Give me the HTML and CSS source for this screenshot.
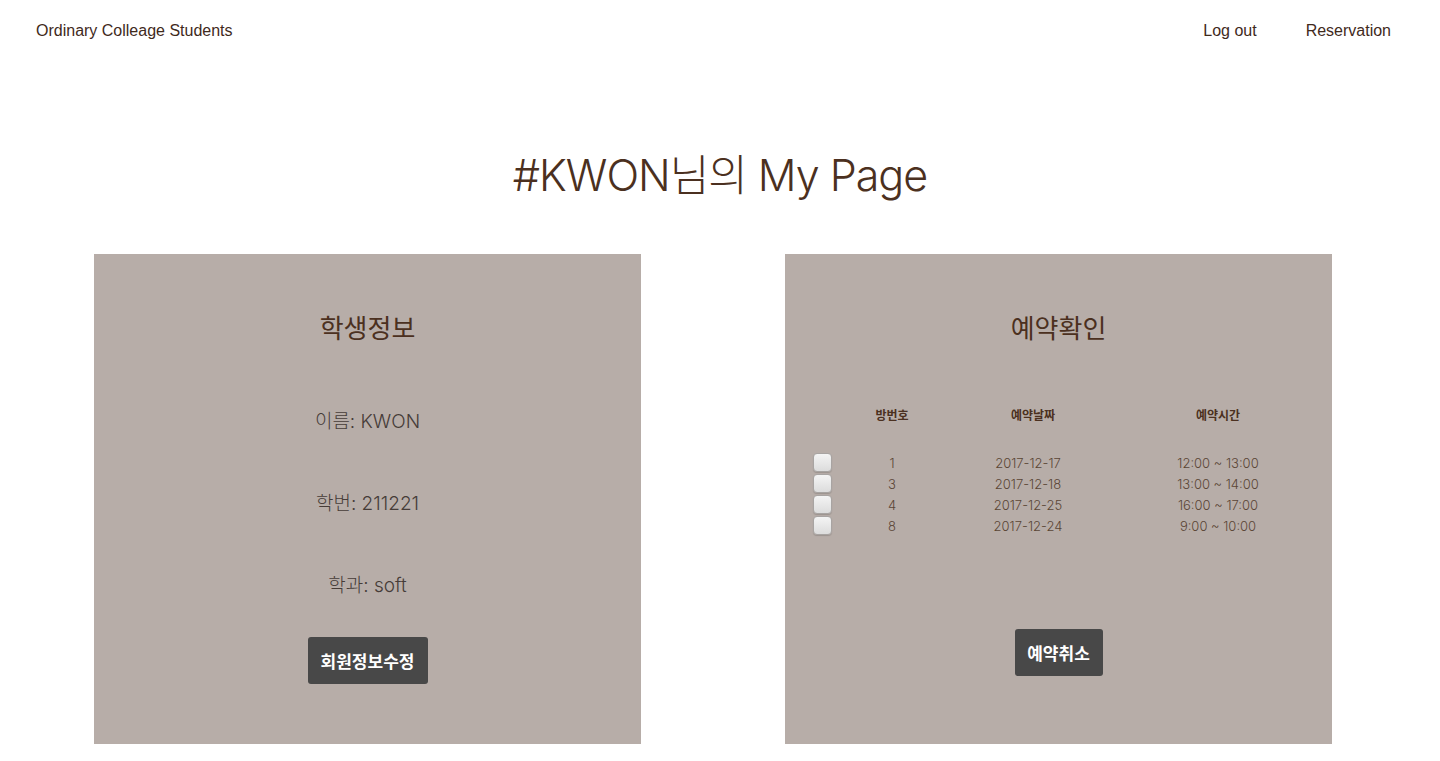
FILE: index.html
```html
<!DOCTYPE html>
<html lang="ko">
<head>
<meta charset="utf-8">
<title>My Page</title>
<link rel="stylesheet" href="styles.css">
</head>
<body>
<header class="topbar">
  <a class="brand" href="#">Ordinary Colleage Students</a>
  <nav class="nav">
    <a href="#">Log out</a>
    <a href="#">Reservation</a>
  </nav>
</header>
<h1 class="page-title">#KWON님의 My Page</h1>
<main class="panels">
  <section class="panel">
    <h2 class="panel-title">학생정보</h2>
    <p class="info first">이름: KWON</p>
    <p class="info">학번: 211221</p>
    <p class="info">학과: soft</p>
    <button class="btn btn-left">회원정보수정</button>
  </section>
  <section class="panel">
    <h2 class="panel-title">예약확인</h2>
    <div class="table">
      <div class="thead">
        <span></span><span>방번호</span><span class="c-date">예약날짜</span><span>예약시간</span>
      </div>
      <div class="tbody">
        <div class="row"><input type="checkbox" class="cb"><span>1</span><span>2017-12-17</span><span>12:00 ~ 13:00</span></div>
        <div class="row"><input type="checkbox" class="cb"><span>3</span><span>2017-12-18</span><span>13:00 ~ 14:00</span></div>
        <div class="row"><input type="checkbox" class="cb"><span>4</span><span>2017-12-25</span><span>16:00 ~ 17:00</span></div>
        <div class="row"><input type="checkbox" class="cb"><span>8</span><span>2017-12-24</span><span>9:00 ~ 10:00</span></div>
      </div>
    </div>
    <button class="btn btn-right">예약취소</button>
  </section>
</main>
</body>
</html>
```

FILE: styles.css
```css
* { box-sizing: border-box; }
html, body { margin: 0; padding: 0; background: #fff; }
body {
  font-family: "Liberation Sans", "Noto Sans CJK KR", sans-serif;
  color: #4b3222;
}
a { color: inherit; text-decoration: none; }

.topbar {
  height: 60px;
  display: flex;
  align-items: center;
  justify-content: space-between;
  padding: 2px 49px 0 36px;
  font-size: 16px;
  color: #3f2a1c;
}
.nav { display: flex; gap: 49px; }

.page-title {
  margin: 89px 0 53px;
  text-align: center;
  font-family: "Inter", "Noto Sans CJK KR", sans-serif;
  font-weight: 300;
  font-size: 43px;
  line-height: 52px;
  letter-spacing: -1px;
  color: #4b3020;
}

.panels {
  display: flex;
  justify-content: center;
  gap: 144px;
  padding-right: 14px;
}
.panel {
  width: 547px;
  height: 490px;
  background: #b7ada8;
  display: flex;
  flex-direction: column;
  align-items: center;
  padding-top: 57px;
}
.panel-title {
  margin: 0;
  font-family: "Noto Sans CJK KR", sans-serif;
  font-weight: 400;
  font-size: 26px;
  line-height: 32px;
  color: #4b3020;
}
.info {
  margin: 58px 0 0;
  font-family: "Inter", "Noto Sans CJK KR", sans-serif;
  font-weight: 300;
  font-size: 19px;
  line-height: 24px;
  color: #463c38;
}
.info.first { margin-top: 67px; }

.btn {
  border: 0;
  border-radius: 3px;
  background: #484848;
  color: #fff;
  font-family: "Noto Sans CJK KR", sans-serif;
  font-weight: 700;
  font-size: 17px;
  height: 47px;
  padding: 0;
}
.btn-left { width: 120px; margin-top: 39px; }
.btn-right { width: 88px; margin-top: 93px; }

.table {
  align-self: stretch;
  margin-top: 61px;
  padding-left: 27px;
  font-size: 13px;
}
.thead, .row {
  display: grid;
  grid-template-columns: 20px 120px 152px 228px;
  align-items: center;
}
.thead span, .row span { text-align: center; }
.thead {
  height: 20px;
  font-family: "Noto Sans CJK KR", sans-serif;
  font-weight: 700;
  font-size: 12px;
  color: #4b3020;
}
.thead .c-date { padding-left: 10px; }
.tbody { margin-top: 28px; }
.row {
  height: 21px;
  font-family: "Inter", sans-serif;
  font-weight: 300;
  color: #5a4535;
}
.cb {
  appearance: none;
  -webkit-appearance: none;
  margin: 0 0 0 1px;
  width: 19px;
  height: 19px;
  border: 1px solid #a8a4a2;
  border-radius: 4px;
  background: linear-gradient(#f4f4f4, #dcdcdc);
  box-shadow: 0 1px 1px rgba(0,0,0,0.15);
}
```
